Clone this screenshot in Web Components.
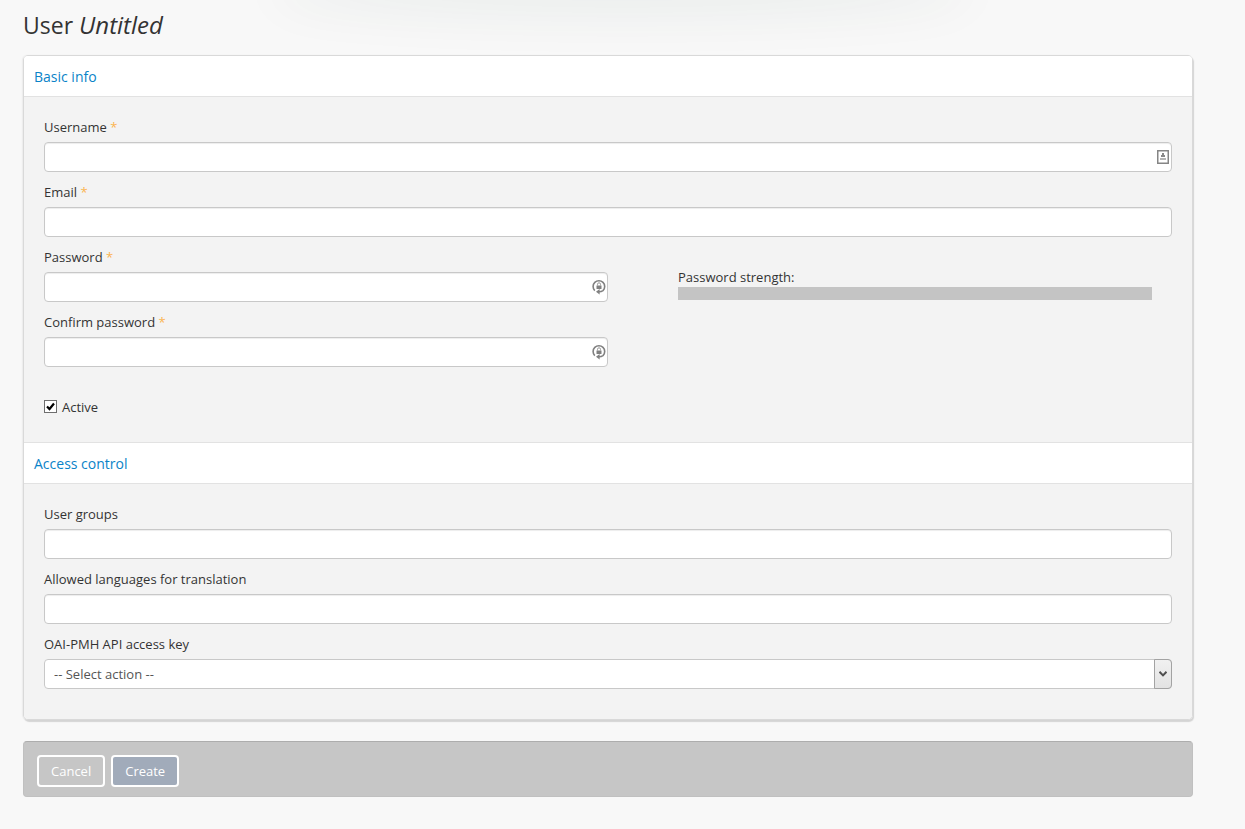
<!DOCTYPE html>
<html lang="en">
<head>
<meta charset="utf-8">
<title>User Untitled</title>
<style>
body { margin: 0; background: #f8f8f8; color: #333; font: 13px/20px "Open Sans", "Noto Sans", sans-serif; }
</style>
</head>
<body>
<user-page>
  <form-panel>
    <form-section heading="Basic info">
      <text-field label="Username" required icon="contact"></text-field>
      <text-field label="Email" type="email" required></text-field>
      <field-columns>
        <text-field label="Password" type="password" required icon="lock"></text-field>
        <text-field label="Confirm password" type="password" required icon="lock"></text-field>
        <strength-meter slot="aside"></strength-meter>
      </field-columns>
      <check-field label="Active"></check-field>
    </form-section>
    <form-section heading="Access control">
      <text-field label="User groups"></text-field>
      <text-field label="Allowed languages for translation"></text-field>
      <select-field label="OAI-PMH API access key"></select-field>
    </form-section>
  </form-panel>
  <action-bar>
    <action-button>Cancel</action-button>
    <action-button kind="primary">Create</action-button>
  </action-bar>
</user-page>
<script>
const define = (name, render) => customElements.define(name, class extends HTMLElement {
  constructor() {
    super();
    this.attachShadow({ mode: "open" });
  }
  connectedCallback() {
    this.shadowRoot.innerHTML = "<style>*{box-sizing:border-box}</style>" + render(this);
  }
});

const icons = {
  contact: `<svg width="12" height="14" viewBox="0 0 12 14"><path d="M.75 .75h10.5v12.5H.75z" fill="#fff" stroke="#858585" stroke-width="1.5"/><path d="M5 3h2v2h1v2H4V5h1z" fill="#888"/><path d="M3 8h6v2H3z" fill="#b4b4b4"/></svg>`,
  lock: `<svg width="14" height="16" viewBox="0 0 14 16"><path d="M2.8 11.6A5.8 5.8 0 1 1 11 11.6Q9.4 12.7 7 12.7" fill="none" stroke="#808080" stroke-width="1.6"/><path d="M4 12.7L7.6 10v5.4z" fill="#808080"/><path d="M4.5 6.5h5V10h-5z" fill="#808080"/><path d="M5.5 6.5V5.3a1.5 1.5 0 0 1 3 0v1.2" fill="none" stroke="#999"/></svg>`
};

const fieldStyle = `
  :host { display: block; margin-bottom: 10px; }
  label { display: block; margin-bottom: 5px; }
  .mark { color: #fbb450; }
  .box { position: relative; }
  input, select {
    display: block; width: 100%; height: 30px; margin: 0; padding: 4px 9px;
    border: 1px solid #c8c8c8; border-radius: 4px; background: #fff; color: #555;
    font: inherit; box-shadow: inset 0 1px 1px rgba(0,0,0,.075);
  }`;

define("user-page", () => `
  <style>
    :host { display: block; position: relative; isolation: isolate; padding: 10px 52px 32px 23px; }
    :host::before { content: ""; position: absolute; z-index: -1; top: -20px; left: 23%; right: 23%; height: 20px;
      border-radius: 50%; box-shadow: 0 0 50px 16px rgba(20,60,50,.06); }
    h1 { margin: 0 0 15px; font-size: 23px; line-height: 30px; font-weight: 400; }
    em { font-size: 24px; }
  </style>
  <h1>User <em>Untitled</em></h1>
  <slot></slot>`);

define("form-panel", () => `
  <style>
    :host { display: block; border: 1px solid #d9d9d9; border-radius: 5px; overflow: hidden;
      box-shadow: 1px 2px 1px #d4d4d4, -1px 0 1px #ebebeb; margin-bottom: 21px; }
  </style>
  <slot></slot>`);

define("form-section", el => `
  <style>
    :host { display: block; background: #f3f3f3; }
    :host(:not(:first-child)) { border-top: 1px solid #e2e2e2; }
    h2 { margin: 0; padding: 11px 10px 9px; font-size: 14px; line-height: 20px; font-weight: 400;
      background: #fff; border-bottom: 1px solid #e2e2e2; }
    a { color: #0a83c8; text-decoration: none; }
    .body { padding: 20px; }
  </style>
  <h2><a href="#">${el.getAttribute("heading")}</a></h2>
  <div class="body"><slot></slot></div>`);

define("text-field", el => `
  <style>${fieldStyle}
    .icon { position: absolute; right: 2px; top: 0; width: 14px; height: 30px;
      display: flex; align-items: center; justify-content: center; }
  </style>
  <label for="field">${el.getAttribute("label")}${el.hasAttribute("required") ? ` <span class="mark">*</span>` : ""}</label>
  <div class="box">
    <input id="field" type="${el.getAttribute("type") || "text"}">
    ${el.hasAttribute("icon") ? `<span class="icon">${icons[el.getAttribute("icon")]}</span>` : ""}
  </div>`);

define("select-field", el => `
  <style>${fieldStyle}
    select { appearance: none; box-shadow: none; }
    .arrow { position: absolute; right: 0; top: 0; width: 18px; height: 30px; pointer-events: none;
      display: flex; align-items: center; justify-content: center;
      border: 1px solid #a3a3a3; border-radius: 0 4px 4px 0;
      background: linear-gradient(#f1f1f1, #e3e3e3); }
  </style>
  <label for="field">${el.getAttribute("label")}</label>
  <div class="box">
    <select id="field"><option>-- Select action --</option></select>
    <span class="arrow"><svg width="8" height="6" viewBox="0 0 8 6"><path d="M.5 .7L4 4.4 7.5 .7" fill="none" stroke="#505050" stroke-width="2"/></svg></span>
  </div>`);

define("field-columns", () => `
  <style>
    :host { display: grid; grid-template-columns: 1fr 1fr; }
    .aside { padding: 20px 20px 0 70px; }
  </style>
  <div><slot></slot></div>
  <div class="aside"><slot name="aside"></slot></div>`);

define("strength-meter", () => `
  <style>
    :host { display: block; }
    .bar { height: 13px; background: #c4c4c4; }
  </style>
  <div>Password strength:</div>
  <div class="bar"></div>`);

define("check-field", el => `
  <style>
    :host { display: block; padding: 20px 0 5px; }
    label { display: flex; align-items: flex-start; gap: 5px; }
    input { appearance: none; width: 13px; height: 13px; margin: 3px 0 0; border: 1px solid #6e6e6e; background: #fff; }
    input:checked { background: #fff url("data:image/svg+xml,%3Csvg xmlns='http://www.w3.org/2000/svg' viewBox='0 0 11 11'%3E%3Cpath d='M2 5.5L4.5 8 9 2.5' fill='none' stroke='%23000' stroke-width='2.2'/%3E%3C/svg%3E") center / 11px; }
  </style>
  <label><input type="checkbox" checked>${el.getAttribute("label")}</label>`);

define("action-bar", () => `
  <style>
    :host { display: flex; gap: 6px; padding: 13px 13px 9px; background: #c6c6c6;
      border: 1px solid #c0c0c0; border-top-color: #adadad; border-radius: 4px; }
  </style>
  <slot></slot>`);

define("action-button", el => `
  <style>
    :host { display: block; }
    button { display: block; height: 32px; margin: 0; padding: 0 12px; border: 2px solid #fff; border-radius: 4px;
      background: ${el.getAttribute("kind") === "primary" ? "#a1abba" : "transparent"};
      color: #fff; font: inherit; }
  </style>
  <button type="button"><slot></slot></button>`);
</script>
</body>
</html>
